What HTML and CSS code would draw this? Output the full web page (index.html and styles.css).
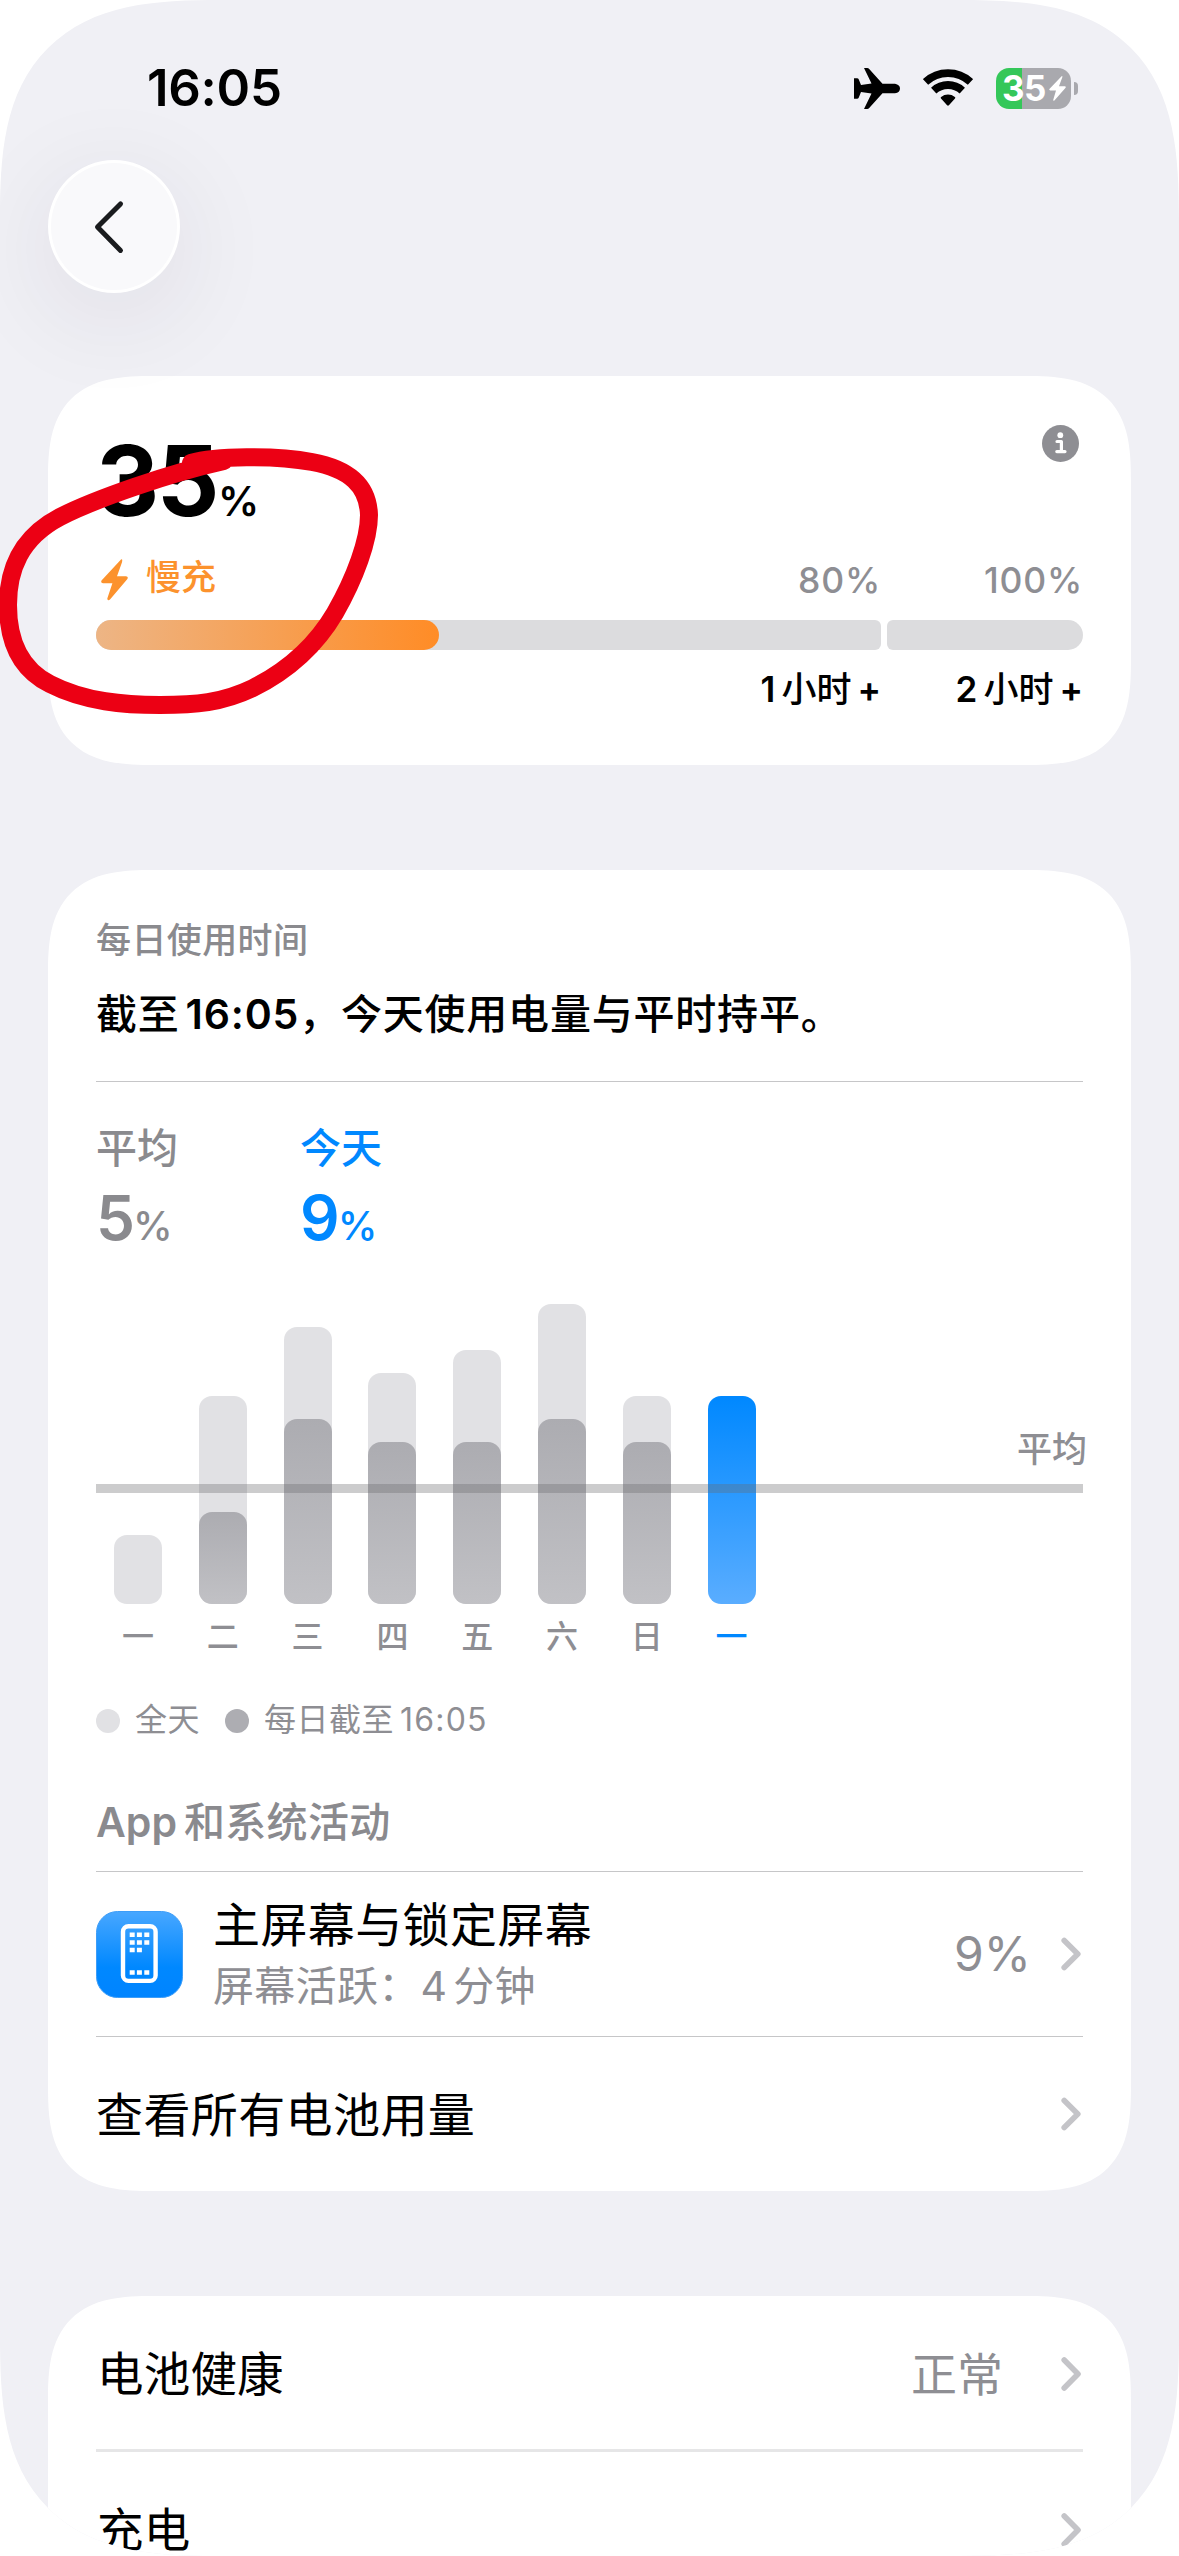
FILE: index.html
```html
<!DOCTYPE html>
<html lang="zh-CN">
<head>
<meta charset="utf-8">
<title>电池</title>
<link rel="stylesheet" href="styles.css">
</head>
<body>
<main class="screen">
  <header class="status">
    <span class="clock">16:05</span>
    <div class="status-icons">
      <svg class="plane" width="46" height="41" viewBox="0 0 46 41"><path d="M10 0H13.2Q14.4 0 15.2 1L28.5 15.7H41Q46 16.6 46 20.5T41 25.3H28.5L15.2 40Q14.4 41 13.2 41H10L17.5 25.4L7 24L4.8 29.6Q4.3 30.8 3 30.8H0V10.2H3Q4.3 10.2 4.8 11.4L7 17L17.5 15.6Z"/></svg>
      <svg class="wifi" width="50" height="38" viewBox="0 0 50 38"><path d="M2.5 12.9A33 33 0 0 1 47.5 12.9M10.7 21.6A21 21 0 0 1 39.3 21.6" fill="none" stroke="#000" stroke-width="7.8"/><path d="M18 29.4Q17.2 28.6 18.1 27.9A11.5 11.5 0 0 1 31.9 27.9Q32.8 28.6 32 29.4L25.9 36.3Q25 37.2 24.1 36.3Z"/></svg>
      <div class="battery">
        <span class="battery-level">35</span>
        <svg width="17" height="25" viewBox="0 0 17 25"><path fill="#fff" d="M12.6.2L.4 12.9Q-.2 14.3 1.2 14.4H7L4.2 24Q4.3 25.2 5.4 24.4L16.6 11.8Q17.2 10.4 15.8 10.3H10L13.4 1Q13.5-.3 12.6.2Z"/></svg>
      </div>
      <span class="battery-cap"></span>
    </div>
  </header>

  <nav class="nav">
    <button class="back" aria-label="返回"><svg width="32" height="54" viewBox="0 0 32 54"><path d="M27.5 3.9L4.5 27.1L27.5 50.4" fill="none" stroke="#1a1c1e" stroke-width="5" stroke-linecap="round" stroke-linejoin="round"/></svg></button>
  </nav>

  <section class="card charge">
    <div class="charge-top">
      <div class="charge-value">35<span class="pct">%</span></div>
      <svg class="info" width="37" height="37" viewBox="0 0 37 37"><circle cx="18.5" cy="18.5" r="18.5" fill="#8e8e93"/><circle cx="18.3" cy="10.2" r="2.9" fill="#fff"/><path d="M15 16.5H19.4V26.6M14.8 26.6H23" fill="none" stroke="#fff" stroke-width="3.2" stroke-linecap="round" stroke-linejoin="round"/></svg>
    </div>
    <div class="marks">
      <span class="slow"><svg width="27" height="42" viewBox="0 0 27 42"><path fill="#fc922d" d="M20 .4L.5 21.4Q-.6 24 2 24.2H11.4L6.3 39.4Q6.6 42.6 9 40.6L26.4 20Q27.6 17.4 25 17.2H16L21 3.2Q21.8-.6 20 .4Z"/></svg><span class="slow-text">慢充</span></span>
      <span class="mark first">80%</span><span class="mark">100%</span>
    </div>
    <div class="meter">
      <div class="meter-main"><div class="meter-fill"></div></div>
      <div class="meter-rest"></div>
    </div>
    <div class="times"><span class="time first">1<b>小时</b>+</span><span class="time">2<b>小时</b>+</span></div>
  </section>

  <section class="card usage">
    <div class="summary">
      <h2>每日使用时间</h2>
      <p>截至<span class="num">16:05</span>，今天使用电量与平时持平。</p>
    </div>
    <div class="stats">
      <div class="stat">平均<div class="stat-value">5<span>%</span></div></div>
      <div class="stat today">今天<div class="stat-value">9<span>%</span></div></div>
    </div>
    <div class="chart">
      <div class="bars">
        <div class="bar" style="height:69px"></div>
        <div class="bar" style="height:208px"><i style="height:92px"></i></div>
        <div class="bar" style="height:277px"><i style="height:185px"></i></div>
        <div class="bar" style="height:231px"><i style="height:162px"></i></div>
        <div class="bar" style="height:254px"><i style="height:162px"></i></div>
        <div class="bar" style="height:300px"><i style="height:185px"></i></div>
        <div class="bar" style="height:208px"><i style="height:162px"></i></div>
        <div class="bar now" style="height:208px"></div>
      </div>
      <div class="average-line"><span>平均</span></div>
    </div>
    <div class="days"><span>一</span><span>二</span><span>三</span><span>四</span><span>五</span><span>六</span><span>日</span><span class="current">一</span></div>
    <div class="legend"><span class="dot"></span><span>全天</span><span class="dot dark"></span><span>每日截至<span class="num">16:05</span></span></div>
    <h3>App<span>和系统活动</span></h3>
    <div class="row app">
      <svg class="app-icon" width="87" height="87" viewBox="0 0 87 87">
        <defs><linearGradient id="home" x1="0" y1="0" x2="0" y2="1"><stop offset="0" stop-color="#48a7ff"/><stop offset=".65" stop-color="#0088ff"/><stop offset="1" stop-color="#0084ff"/></linearGradient></defs>
        <rect x=".5" y=".5" width="86" height="86" rx="21" fill="url(#home)" stroke="#3d9df8"/>
        <rect x="27" y="15.3" width="32.6" height="54.6" rx="5.5" fill="none" stroke="#fff" stroke-width="4.4"/>
        <path fill="#fff" d="M33.7 21.5h5v4.6h-5zM40.9 21.5h5v4.6h-5zM48.3 21.5h5v4.6h-5zM33.7 29.2h5v4.6h-5zM40.9 29.2h5v4.6h-5zM48.3 29.2h5v4.6h-5zM33.7 36.7h5v4.6h-5zM40.9 36.7h5v4.6h-5zM33.7 59.2h5v4.6h-5zM40.9 59.2h5v4.6h-5zM48.3 59.2h5v4.6h-5z"/>
      </svg>
      <div class="app-text"><div class="app-name">主屏幕与锁定屏幕</div><div class="app-sub">屏幕活跃：<span class="minutes">4</span><span>分钟</span></div></div>
      <span class="row-value">9%</span>
      <svg class="chevron" width="20" height="34" viewBox="0 0 20 34"><path d="M3.2 3.4L16.8 17L3.2 30.6"/></svg>
    </div>
    <div class="row all"><span class="row-title">查看所有电池用量</span><svg class="chevron" width="20" height="34" viewBox="0 0 20 34"><path d="M3.2 3.4L16.8 17L3.2 30.6"/></svg></div>
  </section>

  <section class="card settings">
    <div class="row"><span class="row-title">电池健康</span><span class="row-value state">正常</span><svg class="chevron" width="20" height="34" viewBox="0 0 20 34"><path d="M3.2 3L17 17L3.2 31"/></svg></div>
    <div class="row"><span class="row-title">充电</span><svg class="chevron" width="20" height="34" viewBox="0 0 20 34"><path d="M3.2 3L17 17L3.2 31"/></svg></div>
  </section>

  <svg class="marker" width="400" height="320" viewBox="0 430 400 320"><path d="M191 463C215 456 275 455 312 462C350 469 368 486 369 515C369 540 355 578 335 613C315 647 285 672 253 688C222 703 195 705 160 705C125 705 85 702 50 684C20 669 8 640 8 605C8 570 20 538 60 517C95 499 170 473 224 461" fill="none" stroke="#ec0014" stroke-width="18" stroke-linecap="round" stroke-linejoin="round"/></svg>
</main>
</body>
</html>
```
FILE: styles.css
```css
* { box-sizing: border-box; }
body { margin: 0; background: #fff; }
h2, h3, p { margin: 0; font-weight: inherit; }
svg { display: block; flex: none; }

.screen {
  position: relative;
  width: 1179px;
  height: 2556px;
  overflow: hidden;
  background: #f0f0f5;
  border-radius: 165px;
  color: #000;
  font-family: Inter, "Noto Sans CJK SC", sans-serif;
  text-autospace: no-autospace;
  white-space: nowrap;
}

/* status bar */
.status {
  display: flex;
  justify-content: space-between;
  height: 160px;
  padding: 58px 101px 0 147px;
}
.clock { font-size: 51px; font-weight: 600; line-height: 60px; height: 60px; letter-spacing: -.3px; }
.status-icons { display: flex; align-items: center; height: 60px; }
.wifi { margin-left: 23px; }
.battery {
  display: flex;
  align-items: center;
  width: 75px;
  height: 41px;
  margin-left: 23px;
  padding-left: 6px;
  border-radius: 13px;
  background: linear-gradient(90deg, #34c759 26px, #a9a9ae 26px);
}
.battery-level { width: 47px; color: #fff; font-size: 35px; font-weight: 700; line-height: 41px; letter-spacing: -.5px; }
.battery-cap { width: 4px; height: 13px; margin-left: 3px; border-radius: 0 6px 6px 0; background: #a9a9ae; }

/* navigation */
.nav { display: flex; height: 216px; padding-left: 48px; position: relative; }
.back {
  display: flex;
  align-items: center;
  width: 132px;
  height: 133px;
  padding: 0 0 0 42px;
  border: 3px solid #fff;
  border-radius: 50%;
  background: #f9f9fb;
  box-shadow: 0 22px 100px 8px rgba(40, 30, 60, .07);
}

/* cards */
.card { margin: 0 48px; padding: 0 48px; border-radius: 80px; background: #fff; }
@supports (corner-shape: superellipse(1.5)) {
  .screen { border-radius: 221px; corner-shape: superellipse(1.5); }
  .card { border-radius: 106px; corner-shape: superellipse(1.5); }
}

/* charge card */
.charge { height: 389px; padding-top: 49px; }
.charge-top { display: flex; justify-content: space-between; height: 131px; padding: 0 4px 0 0; }
.charge-value { padding-top: 1px; font-size: 98px; font-weight: 700; line-height: 110px; letter-spacing: -2.5px; }
.pct { margin-left: 1px; font-size: 41px; font-weight: 600; letter-spacing: 0; }
.marks, .times { display: flex; justify-content: flex-end; align-items: center; }
.marks { align-items: flex-start; height: 64px; color: #8e8e93; font-size: 35.5px; font-weight: 500; line-height: 50px; letter-spacing: .8px; }
.slow { display: flex; align-items: center; gap: 18px; height: 48px; margin: 0 auto 0 5px; color: #fc922d; }
.slow-text { padding-bottom: 7px; font-size: 35px; letter-spacing: 0; }
.mark, .time { width: 202px; text-align: right; }
.first { width: auto; }
.meter { display: flex; gap: 6px; height: 30px; }
.meter-main { width: 785px; border-radius: 15px 6px 6px 15px; background: #dcdcde; }
.meter-fill { width: 343px; height: 30px; border-radius: 15px; background: linear-gradient(90deg, #edb585, #ff8c26); }
.meter-rest { width: 196px; border-radius: 6px 15px 15px 6px; background: #dcdcde; }
.times { height: 73px; font-size: 35px; font-weight: 600; }
.time b { margin: 0 6px; font-weight: 500; }

/* daily usage */
.usage { height: 1321px; margin-top: 105px; }
.summary { height: 212px; padding-top: 46px; border-bottom: 1px solid #c6c6c8; }
.summary h2 { color: #8a8a8e; font-size: 35px; font-weight: 500; line-height: 49px; letter-spacing: .4px; }
.summary p { margin-top: 19px; font-size: 41px; font-weight: 500; line-height: 60px; letter-spacing: .8px; }
.summary .num { font-weight: 600; }
.num { margin-left: 6px; }
.stats { display: flex; height: 222px; padding-top: 41px; color: #8a8a8e; }
.stat { width: 204px; font-size: 41px; font-weight: 500; line-height: 50px; }
.stat-value { margin-top: 10px; font-size: 62px; font-weight: 600; line-height: 70px; }
.stat-value span { margin-left: -2px; font-size: 40px; font-weight: 500; letter-spacing: 0; }
.today { color: #0088ff; }

.chart { position: relative; height: 300px; }
.bars { display: flex; align-items: flex-end; gap: 36.8px; height: 300px; padding-left: 18px; }
.bar { display: flex; align-items: flex-end; width: 48px; border-radius: 13px; background: #e1e1e4; }
.bar i { width: 48px; border-radius: 13px; background: linear-gradient(#acacb1, #c1c1c5); }
.now { background: linear-gradient(#0088ff, #5aadff); }
.average-line { position: absolute; left: 0; right: 0; top: 180px; height: 9px; background: rgba(105, 105, 108, .34); }
.average-line span { position: absolute; right: -4px; top: -60px; color: #8e8e93; font-size: 35px; font-weight: 500; line-height: 50px; }
.days { display: flex; height: 94px; padding: 13px 0 0 18px; color: #8e8e93; font-size: 32px; font-weight: 500; line-height: 40px; gap: 36.8px; }
.days span { width: 48px; text-align: center; }
.days .current { color: #0088ff; }
.legend { display: flex; align-items: center; height: 44px; color: #8e8e93; font-size: 32px; letter-spacing: .5px; line-height: 40px; }
.legend span { margin-top: -1px; }
.legend .dot { width: 24px; height: 24px; margin: 1px 15px 0 0; border-radius: 50%; background: #e1e1e4; }
.legend .dot.dark { margin-left: 25px; background: #adadb2; }
.legend .num { margin-left: 6px; letter-spacing: 1.2px; }
.usage h3 { height: 130px; padding-top: 55px; border-bottom: 1px solid #c6c6c8; color: #8a8a8e; font-size: 41px; font-weight: 600; line-height: 50px; }
.usage h3 span { margin-left: 7px; font-weight: 500; letter-spacing: .3px; }

/* list rows */
.row { display: flex; align-items: center; justify-content: space-between; padding-right: 2px; }
.row-title { padding-top: 1px; font-size: 47px; line-height: 50px; letter-spacing: .4px; }
.row-value { margin-left: auto; margin-right: 30px; color: #8e8e93; font-size: 48px; line-height: 60px; }
.chevron path { fill: none; stroke: #c4c4c8; stroke-width: 5.6; stroke-linecap: round; stroke-linejoin: round; }
.app { height: 165px; border-bottom: 1px solid #c6c6c8; }
.app-text { margin-left: 30px; padding-top: 4px; }
.app-name { font-size: 47px; line-height: 60px; letter-spacing: .4px; }
.app-sub { color: #8e8e93; font-size: 41px; line-height: 62px; letter-spacing: .3px; }
.app-sub span { margin-left: 6px; }
.app-sub .minutes { margin-left: 1px; }
.all { height: 154px; }
.settings { height: 314px; margin-top: 105px; }
.settings .row { height: 156px; }
.settings .row:first-child { border-bottom: 3px solid #e6e6e7; padding-top: 2px; }
.settings .row-title { padding: 0 0 0 1px; font-size: 46.5px; letter-spacing: .2px; }
.settings .row-value { margin-right: 58px; font-size: 46px; }

/* hand-drawn highlight over the charging status */
.marker { position: absolute; left: 0; top: 430px; }
```
